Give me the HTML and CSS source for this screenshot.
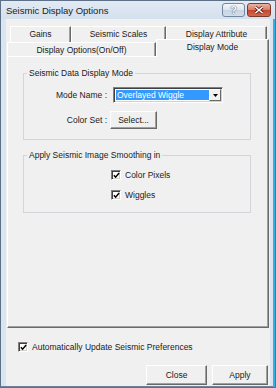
FILE: index.html
```html
<!DOCTYPE html>
<html lang="en">
<head>
    <meta charset="UTF-8">
    <title>Seismic Display Options</title>
    <link rel="stylesheet" href="styles.css">
</head>
<body>
    <div class="window">
        <div class="titlebar">
            <span class="title">Seismic Display Options</span>
            <div class="caption-buttons">
                <span class="cap-btn help">?</span>
                <span class="cap-btn close">
                    <svg width="10" height="8" viewBox="0 0 10 8">
                        <path d="M1.5 1 L8.5 7 M8.5 1 L1.5 7" stroke="#5a1a10" stroke-width="3"/>
                        <path d="M1.5 1 L8.5 7 M8.5 1 L1.5 7" stroke="#fff" stroke-width="1.6"/>
                    </svg>
                </span>
            </div>
        </div>

        <div class="client">
            <div class="tabs">
                <div class="tab-row back">
                    <div class="tab tab-gains">Gains</div>
                    <div class="tab tab-scales">Seismic Scales</div>
                    <div class="tab tab-attr">Display Attribute</div>
                </div>
                <div class="tab-row front">
                    <div class="tab tab-onoff">Display Options(On/Off)</div>
                    <div class="tab tab-mode selected">Display Mode</div>
                </div>
            </div>

            <div class="panel">
                <fieldset class="group group-mode">
                    <legend>Seismic Data Display Mode</legend>
                    <div class="form-grid">
                        <span class="field-label">Mode Name :</span>
                        <div class="combo">
                            <span class="combo-value">Overlayed Wiggle</span>
                            <span class="combo-btn">
                                <svg width="5" height="3" viewBox="0 0 5 3"><path d="M0 0 H5 L2.5 3 Z" fill="#000"/></svg>
                            </span>
                        </div>
                        <span class="field-label">Color Set :</span>
                        <button class="btn btn-select">Select...</button>
                    </div>
                </fieldset>

                <fieldset class="group group-smooth">
                    <legend>Apply Seismic Image Smoothing in</legend>
                    <div class="check-list">
                        <label class="check">
                            <span class="box"><svg viewBox="0 0 8 8"><path d="M1 3.6 L3 5.9 L7 1.2" stroke="#000" stroke-width="1.7" fill="none"/></svg></span>
                            Color Pixels
                        </label>
                        <label class="check">
                            <span class="box"><svg viewBox="0 0 8 8"><path d="M1 3.6 L3 5.9 L7 1.2" stroke="#000" stroke-width="1.7" fill="none"/></svg></span>
                            Wiggles
                        </label>
                    </div>
                </fieldset>
            </div>

            <label class="check auto-update">
                <span class="box"><svg viewBox="0 0 8 8"><path d="M1 3.6 L3 5.9 L7 1.2" stroke="#000" stroke-width="1.7" fill="none"/></svg></span>
                Automatically Update Seismic Preferences
            </label>

            <div class="actions">
                <button class="btn btn-close">Close</button>
                <button class="btn btn-apply">Apply</button>
            </div>
        </div>
    </div>
</body>
</html>
```

FILE: styles.css
```css
body {
    margin: 0;
    font-family: "Liberation Sans", Arial, sans-serif;
    font-size: 8.5px;
    color: #1a1a1a;
}

.window {
    width: 276px;
    height: 388px;
    box-sizing: border-box;
    background-color: #dbe5f0;
    border: 1px solid #5d7087;
    box-shadow: inset -2px 0 #2db3ea, inset 0 -1px #6f8398;
    display: flex;
    flex-direction: column;
    overflow: hidden;
}

/* title bar */
.titlebar {
    height: 18px;
    display: flex;
    align-items: center;
    padding: 0 4px 0 5px;
    background: linear-gradient(#e2eaf3, #d4e0ed);
}

.title {
    flex: 1;
    font-size: 9.5px;
    padding-top: 1px;
}

.caption-buttons {
    display: flex;
    gap: 2px;
    align-self: flex-start;
    margin-top: 2px;
}

.cap-btn {
    width: 23px;
    height: 14px;
    box-sizing: border-box;
    border: 1px solid #7387a0;
    border-radius: 3px;
    display: flex;
    align-items: center;
    justify-content: center;
}

.help {
    background: linear-gradient(#f3f6fa, #dce5ef 50%, #c8d4e2 51%, #d3deea);
    color: #f7f9fb;
    font-size: 11px;
    font-weight: bold;
    text-shadow: 0 0 1px #4e6175, 0 0 1px #4e6175;
}

.close {
    width: 24px;
    border-color: #7a3a2e;
    background: linear-gradient(#eab3a6, #d77a64 50%, #c4452c 51%, #d3684e);
}

/* client area */
.client {
    flex: 1;
    margin: 0 5px 1px 5px;
    background-color: #f0f0f0;
    display: flex;
    flex-direction: column;
}

.tabs {
    padding-top: 7px;
}

.tab-row {
    display: flex;
    align-items: flex-start;
}

.tab-row.back {
    margin-left: 4px;
    height: 16px;
}

.tab-row.front {
    margin-left: 1px;
    height: 14px;
}

.tab {
    box-sizing: border-box;
    background-color: #f0f0f0;
    border-top: 1px solid #fff;
    border-left: 1px solid #fff;
    border-right: 1px solid #696969;
    box-shadow: inset -1px 0 #a0a0a0;
    text-align: center;
    white-space: nowrap;
}

.back .tab {
    height: 16px;
    line-height: 15px;
}

.front .tab {
    height: 14px;
    line-height: 14px;
}

.tab-gains { width: 61px; }
.tab-scales { width: 95px; }
.tab-attr { width: 101px; }
.tab-onoff { width: 149px; }

.front .tab.selected {
    width: 113px;
    height: 18px;
    margin-top: -3px;
    line-height: 15px;
    position: relative;
    z-index: 1;
}

/* tab page */
.panel {
    margin-left: 1px;
    width: 262px;
    height: 272px;
    box-sizing: border-box;
    border: 1px solid;
    border-color: #fff #696969 #696969 #fff;
    box-shadow: inset -1px -1px #a0a0a0;
    padding: 11px 0 0 15px;
}

.group {
    margin: 0;
    width: 228px;
    box-sizing: border-box;
    border: 1px solid #d2d6da;
    padding: 0;
    min-inline-size: 0;
}

.group legend {
    margin-left: 3px;
    padding: 0 2px;
    line-height: 10px;
}

.group-mode {
    height: 72px;
    padding-top: 9px;
}

.group-smooth {
    height: 63px;
    margin-top: 10px;
    padding-top: 9px;
}

.form-grid {
    display: grid;
    grid-template-columns: 83px auto;
    row-gap: 8px;
    align-items: center;
    justify-items: start;
}

.field-label {
    justify-self: end;
}

.combo {
    margin-left: 6px;
    width: 110px;
    height: 16px;
    box-sizing: border-box;
    border: 1px solid;
    border-color: #808080 #fff #fff #808080;
    box-shadow: inset 1px 1px #404040, inset -1px -1px #d4d0c8;
    background-color: #fff;
    display: flex;
    padding: 2px;
}

.combo-value {
    flex: 1;
    background-color: #3399ff;
    color: #fff;
    line-height: 10px;
    padding-left: 1px;
}

.combo-btn {
    width: 12px;
    box-sizing: border-box;
    margin: -1px -1px -1px 0;
    background-color: #f0f0f0;
    border: 1px solid;
    border-color: #fff #696969 #696969 #fff;
    display: flex;
    align-items: center;
    justify-content: center;
}

.btn {
    font-family: inherit;
    font-size: inherit;
    color: #1a1a1a;
    background-color: #f0f0f0;
    border: 1px solid;
    border-color: #fff #696969 #696969 #fff;
    box-shadow: inset -1px -1px #a0a0a0;
    padding: 0;
    box-sizing: border-box;
}

.btn-select {
    margin-left: 3px;
    width: 47px;
    height: 18px;
}

.check-list {
    display: flex;
    flex-direction: column;
    gap: 8px;
    margin-left: 87px;
}

.check {
    display: flex;
    align-items: center;
    gap: 4px;
    height: 12px;
}

.box {
    width: 10px;
    height: 10px;
    box-sizing: border-box;
    border: 1px solid;
    border-color: #808080 #fff #fff #808080;
    box-shadow: inset 1px 1px #404040, inset -1px -1px #d4d0c8;
    background-color: #fff;
    display: flex;
    align-items: center;
    justify-content: center;
}

.box svg {
    width: 7px;
    height: 7px;
}

.auto-update {
    margin: 13px 0 0 12px;
}

.actions {
    display: flex;
    justify-content: flex-end;
    gap: 5px;
    margin: 12px 2px 0 0;
}

.btn-close {
    width: 61px;
    height: 20px;
}

.btn-apply {
    width: 56px;
    height: 20px;
}
```
